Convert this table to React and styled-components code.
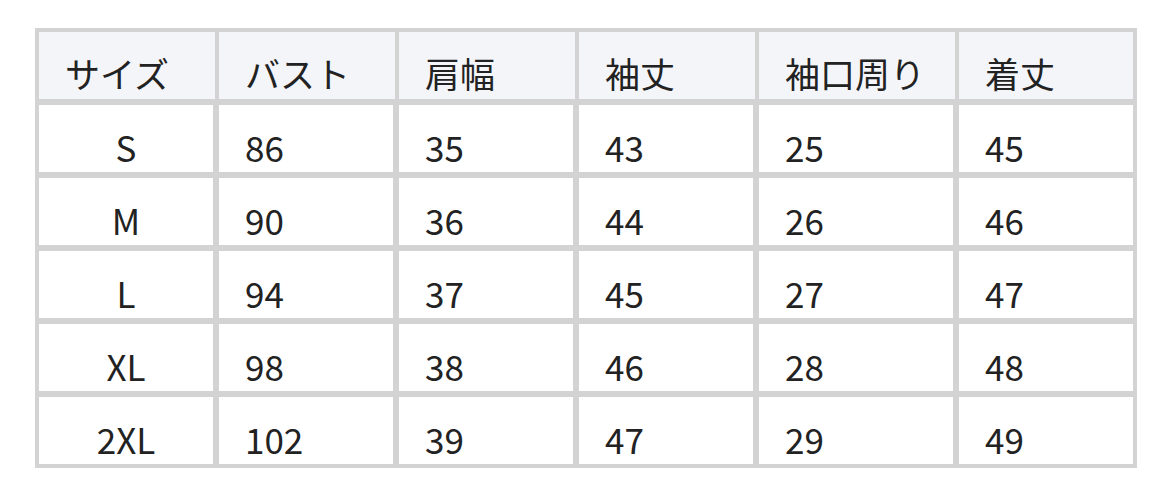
import styled, { createGlobalStyle } from "styled-components";

const GlobalStyle = createGlobalStyle`
  body {
    margin: 0;
    background: #ffffff;
    font-family: "Noto Sans CJK JP", "Noto Sans", sans-serif;
  }
`;

const columns = [
  { title: "サイズ", width: 176 },
  { title: "バスト", width: 176 },
  { title: "肩幅", width: 176 },
  { title: "袖丈", width: 176 },
  { title: "袖口周り", width: 196 },
  { title: "着丈", width: 174 },
];

const rows = [
  ["S", "86", "35", "43", "25", "45"],
  ["M", "90", "36", "44", "26", "46"],
  ["L", "94", "37", "45", "27", "47"],
  ["XL", "98", "38", "46", "28", "48"],
  ["2XL", "102", "39", "47", "29", "49"],
];

export default function App() {
  return (
    <Page>
      <GlobalStyle />
      <SizeTable>
        <thead>
          <tr>
            {columns.map((c) => (
              <HeadCell key={c.title} $width={c.width}>
                {c.title}
              </HeadCell>
            ))}
          </tr>
        </thead>
        <tbody>
          {rows.map((r) => (
            <tr key={r[0]}>
              {r.map((v, i) => (
                <BodyCell key={i} $center={i === 0}>
                  {v}
                </BodyCell>
              ))}
            </tr>
          ))}
        </tbody>
      </SizeTable>
    </Page>
  );
}

const Page = styled.div`
  padding: 28px 35px;
`;

const SizeTable = styled.table`
  width: 1102px;
  table-layout: fixed;
  border-collapse: separate;
  border-spacing: 4px;
  background: #d3d3d3;
  color: #222222;
  font-size: 35px;
`;

const HeadCell = styled.th`
  width: ${(p) => p.$width}px;
  height: 67px;
  padding: 13px 26px 0;
  box-sizing: border-box;
  background: #f4f5f9;
  font-weight: 400;
  text-align: left;
  white-space: nowrap;
`;

const BodyCell = styled.td`
  height: 69px;
  padding: 15px 26px 0;
  box-sizing: border-box;
  background: #ffffff;
  border-top: 2px solid #d3d3d3;
  text-align: ${(p) => (p.$center ? "center" : "left")};
  white-space: nowrap;

  &:not(:last-child) {
    border-right: 2px solid #d3d3d3;
  }
`;
